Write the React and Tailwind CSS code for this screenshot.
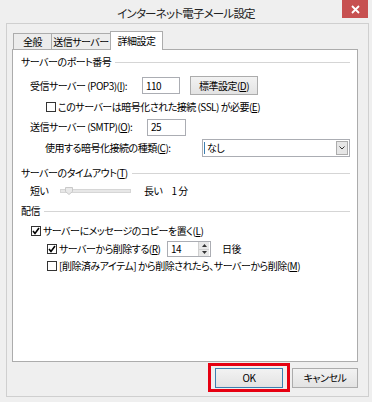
import React from "react";

function Check({ checked }) {
  return (
    <span className="w-[10px] h-[10px] border border-[#333] bg-white flex items-center justify-center shrink-0">
      {checked && (
        <svg width="8" height="8" viewBox="0 0 8 8">
          <path d="M1 4 L3 6.5 L7 1" fill="none" stroke="#000" strokeWidth="1.6" />
        </svg>
      )}
    </span>
  );
}

function Header({ children, className }) {
  return (
    <div className={"flex items-center h-[14px] " + className}>
      <span className="whitespace-nowrap">{children}</span>
      <span className="flex-1 h-px bg-[#d5d5d5] ml-[4px]" />
    </div>
  );
}

export default function App() {
  return (
    <div className="w-[372px] h-[402px] bg-[#efefef] flex flex-col text-[10px] leading-[14px] tracking-[-0.5px] text-black [font-feature-settings:'palt'] font-['Noto_Sans_CJK_JP',sans-serif]">
      {/* title bar */}
      <div className="h-[23px] flex items-start">
        <div className="w-[30px]" />
        <div className="flex-1 text-center text-[11.5px] leading-[16px] tracking-[-0.8px] pt-[5px] text-[#222]">
          インターネット電子メール設定
        </div>
        <div className="w-[26px] h-[18px] mr-[4px] bg-[#c75050] flex items-center justify-center">
          <svg width="9" height="9" viewBox="0 0 9 9">
            <path d="M1 1 L8 8 M8 1 L1 8" stroke="#fff" strokeWidth="1.8" />
          </svg>
        </div>
      </div>

      {/* frame */}
      <div className="ml-[6px] w-[363px] h-[374px] border border-[#cfcfcf] flex flex-col">
        {/* tabs */}
        <div className="mt-[7px] ml-[6px] h-[19px] flex items-end">
          <div className="w-[39px] h-[16px] mb-px border border-b-0 border-[#acacac] bg-[#ececec] flex items-center justify-center">
            全般
          </div>
          <div className="-ml-px w-[60px] h-[16px] mb-px border border-b-0 border-[#acacac] bg-[#ececec] flex items-center justify-center">
            送信サーバー
          </div>
          <div className="-ml-px relative z-10 w-[53px] h-[19px] border border-b-0 border-[#acacac] bg-white flex items-center justify-center pb-[1px]">
            詳細設定
          </div>
        </div>

        {/* panel */}
        <div className="-mt-px ml-[5px] w-[346px] h-[313px] border border-[#acacac] bg-white flex flex-col pl-[8px] pr-[7px]">
          <Header className="mt-[5px]">サーバーのポート番号</Header>

          <div className="mt-[7px] h-[19px] flex items-center">
            <span className="ml-[9px] w-[112px] whitespace-nowrap">
              受信サーバー (POP3)(<u>I</u>):
            </span>
            <div className="w-[38px] h-[17px] border border-[#abadb3] bg-white flex items-center pl-[3px]">110</div>
            <div className="ml-[10px] w-[68px] h-[19px] border border-[#acacac] bg-[linear-gradient(#f2f2f2,#e3e3e3)] flex items-center justify-center">
              標準設定(<u>D</u>)
            </div>
          </div>

          <div className="mt-[5px] h-[14px] flex items-center">
            <span className="ml-[25px]">
              <Check />
            </span>
            <span className="ml-[2px] whitespace-nowrap">
              このサーバーは暗号化された接続 (SSL) が必要(<u>E</u>)
            </span>
          </div>

          <div className="mt-[5px] h-[16px] flex items-center">
            <span className="ml-[9px] w-[117px] whitespace-nowrap">
              送信サーバー (SMTP)(<u>O</u>):
            </span>
            <div className="w-[39px] h-[17px] border border-[#abadb3] bg-white flex items-center pl-[3px]">25</div>
          </div>

          <div className="mt-[4px] h-[18px] flex items-center">
            <span className="ml-[24px] w-[157px] whitespace-nowrap">
              使用する暗号化接続の種類(<u>C</u>):
            </span>
            <div className="w-[148px] h-[18px] border border-[#abadb3] bg-white flex items-center">
              <span className="w-px h-[12px] bg-[#3c7fb1] ml-px" />
              <span className="ml-[2px] flex-1">なし</span>
              <div className="w-[12px] h-[14px] mr-px border border-[#acacac] bg-[#e6e6e6] flex items-center justify-center">
                <svg width="6" height="4" viewBox="0 0 6 4">
                  <path d="M0.5 0.5 L3 3 L5.5 0.5" fill="none" stroke="#333" strokeWidth="1" />
                </svg>
              </div>
            </div>
          </div>

          <Header className="mt-[9px]">
            サーバーのタイムアウト(<u>T</u>)
          </Header>

          <div className="mt-[4px] h-[14px] flex items-center">
            <span className="ml-[9px] w-[30px]">短い</span>
            <svg width="71" height="8" viewBox="0 0 71 8">
              <rect x="0.5" y="2.5" width="70" height="3" fill="#e7e7e7" stroke="#d6d6d6" />
              <path d="M5.5 0.5 H12.5 V4.5 L9 7.5 L5.5 4.5 Z" fill="#e9e9e9" stroke="#c9c9c9" />
            </svg>
            <span className="ml-[13px]">長い</span>
            <span className="ml-[9px]">1 分</span>
          </div>

          <Header className="mt-[6px]">配信</Header>

          <div className="mt-[6px] h-[14px] flex items-center">
            <span className="ml-[10px]">
              <Check checked />
            </span>
            <span className="ml-[2px] whitespace-nowrap">
              サーバーにメッセージのコピーを置く(<u>L</u>)
            </span>
          </div>

          <div className="mt-[3px] h-[16px] flex items-center">
            <span className="ml-[26px]">
              <Check checked />
            </span>
            <span className="ml-[2px] w-[108px] whitespace-nowrap">
              サーバーから削除する(<u>R</u>)
            </span>
            <div className="w-[44px] h-[16px] border border-[#abadb3] bg-white flex items-center">
              <span className="flex-1 pl-[3px]">14</span>
              <div className="w-[11px] h-[14px] mr-px flex flex-col border-l border-[#d0d0d0]">
                <div className="flex-1 bg-[#e8e8e8] border-b border-[#cfcfcf] flex items-center justify-center">
                  <svg width="5" height="3" viewBox="0 0 5 3">
                    <path d="M0 3 L2.5 0 L5 3 Z" fill="#333" />
                  </svg>
                </div>
                <div className="flex-1 bg-[#e8e8e8] flex items-center justify-center">
                  <svg width="5" height="3" viewBox="0 0 5 3">
                    <path d="M0 0 L2.5 3 L5 0 Z" fill="#333" />
                  </svg>
                </div>
              </div>
            </div>
            <span className="ml-[11px]">日後</span>
          </div>

          <div className="mt-[2px] h-[14px] flex items-center">
            <span className="ml-[26px]">
              <Check />
            </span>
            <span className="ml-[2px] whitespace-nowrap">
              [削除済みアイテム] から削除されたら、サーバーから削除(<u>M</u>)
            </span>
          </div>
        </div>

        {/* buttons */}
        <div className="mt-[6px] ml-[5px] w-[346px] flex justify-end">
          <div className="relative">
            <div className="w-[68px] h-[20px] border border-[#3c7fb1] bg-[linear-gradient(#f2f2f2,#e3e3e3)] flex items-center justify-center">
              OK
            </div>
            <div className="absolute -left-[7px] -top-[5px] w-[82px] h-[29px] border-[3px] border-[#e60012]" />
          </div>
          <div className="ml-[9px] w-[66px] h-[20px] border border-[#acacac] bg-[linear-gradient(#f2f2f2,#e3e3e3)] flex items-center justify-center">
            キャンセル
          </div>
        </div>
      </div>
    </div>
  );
}
